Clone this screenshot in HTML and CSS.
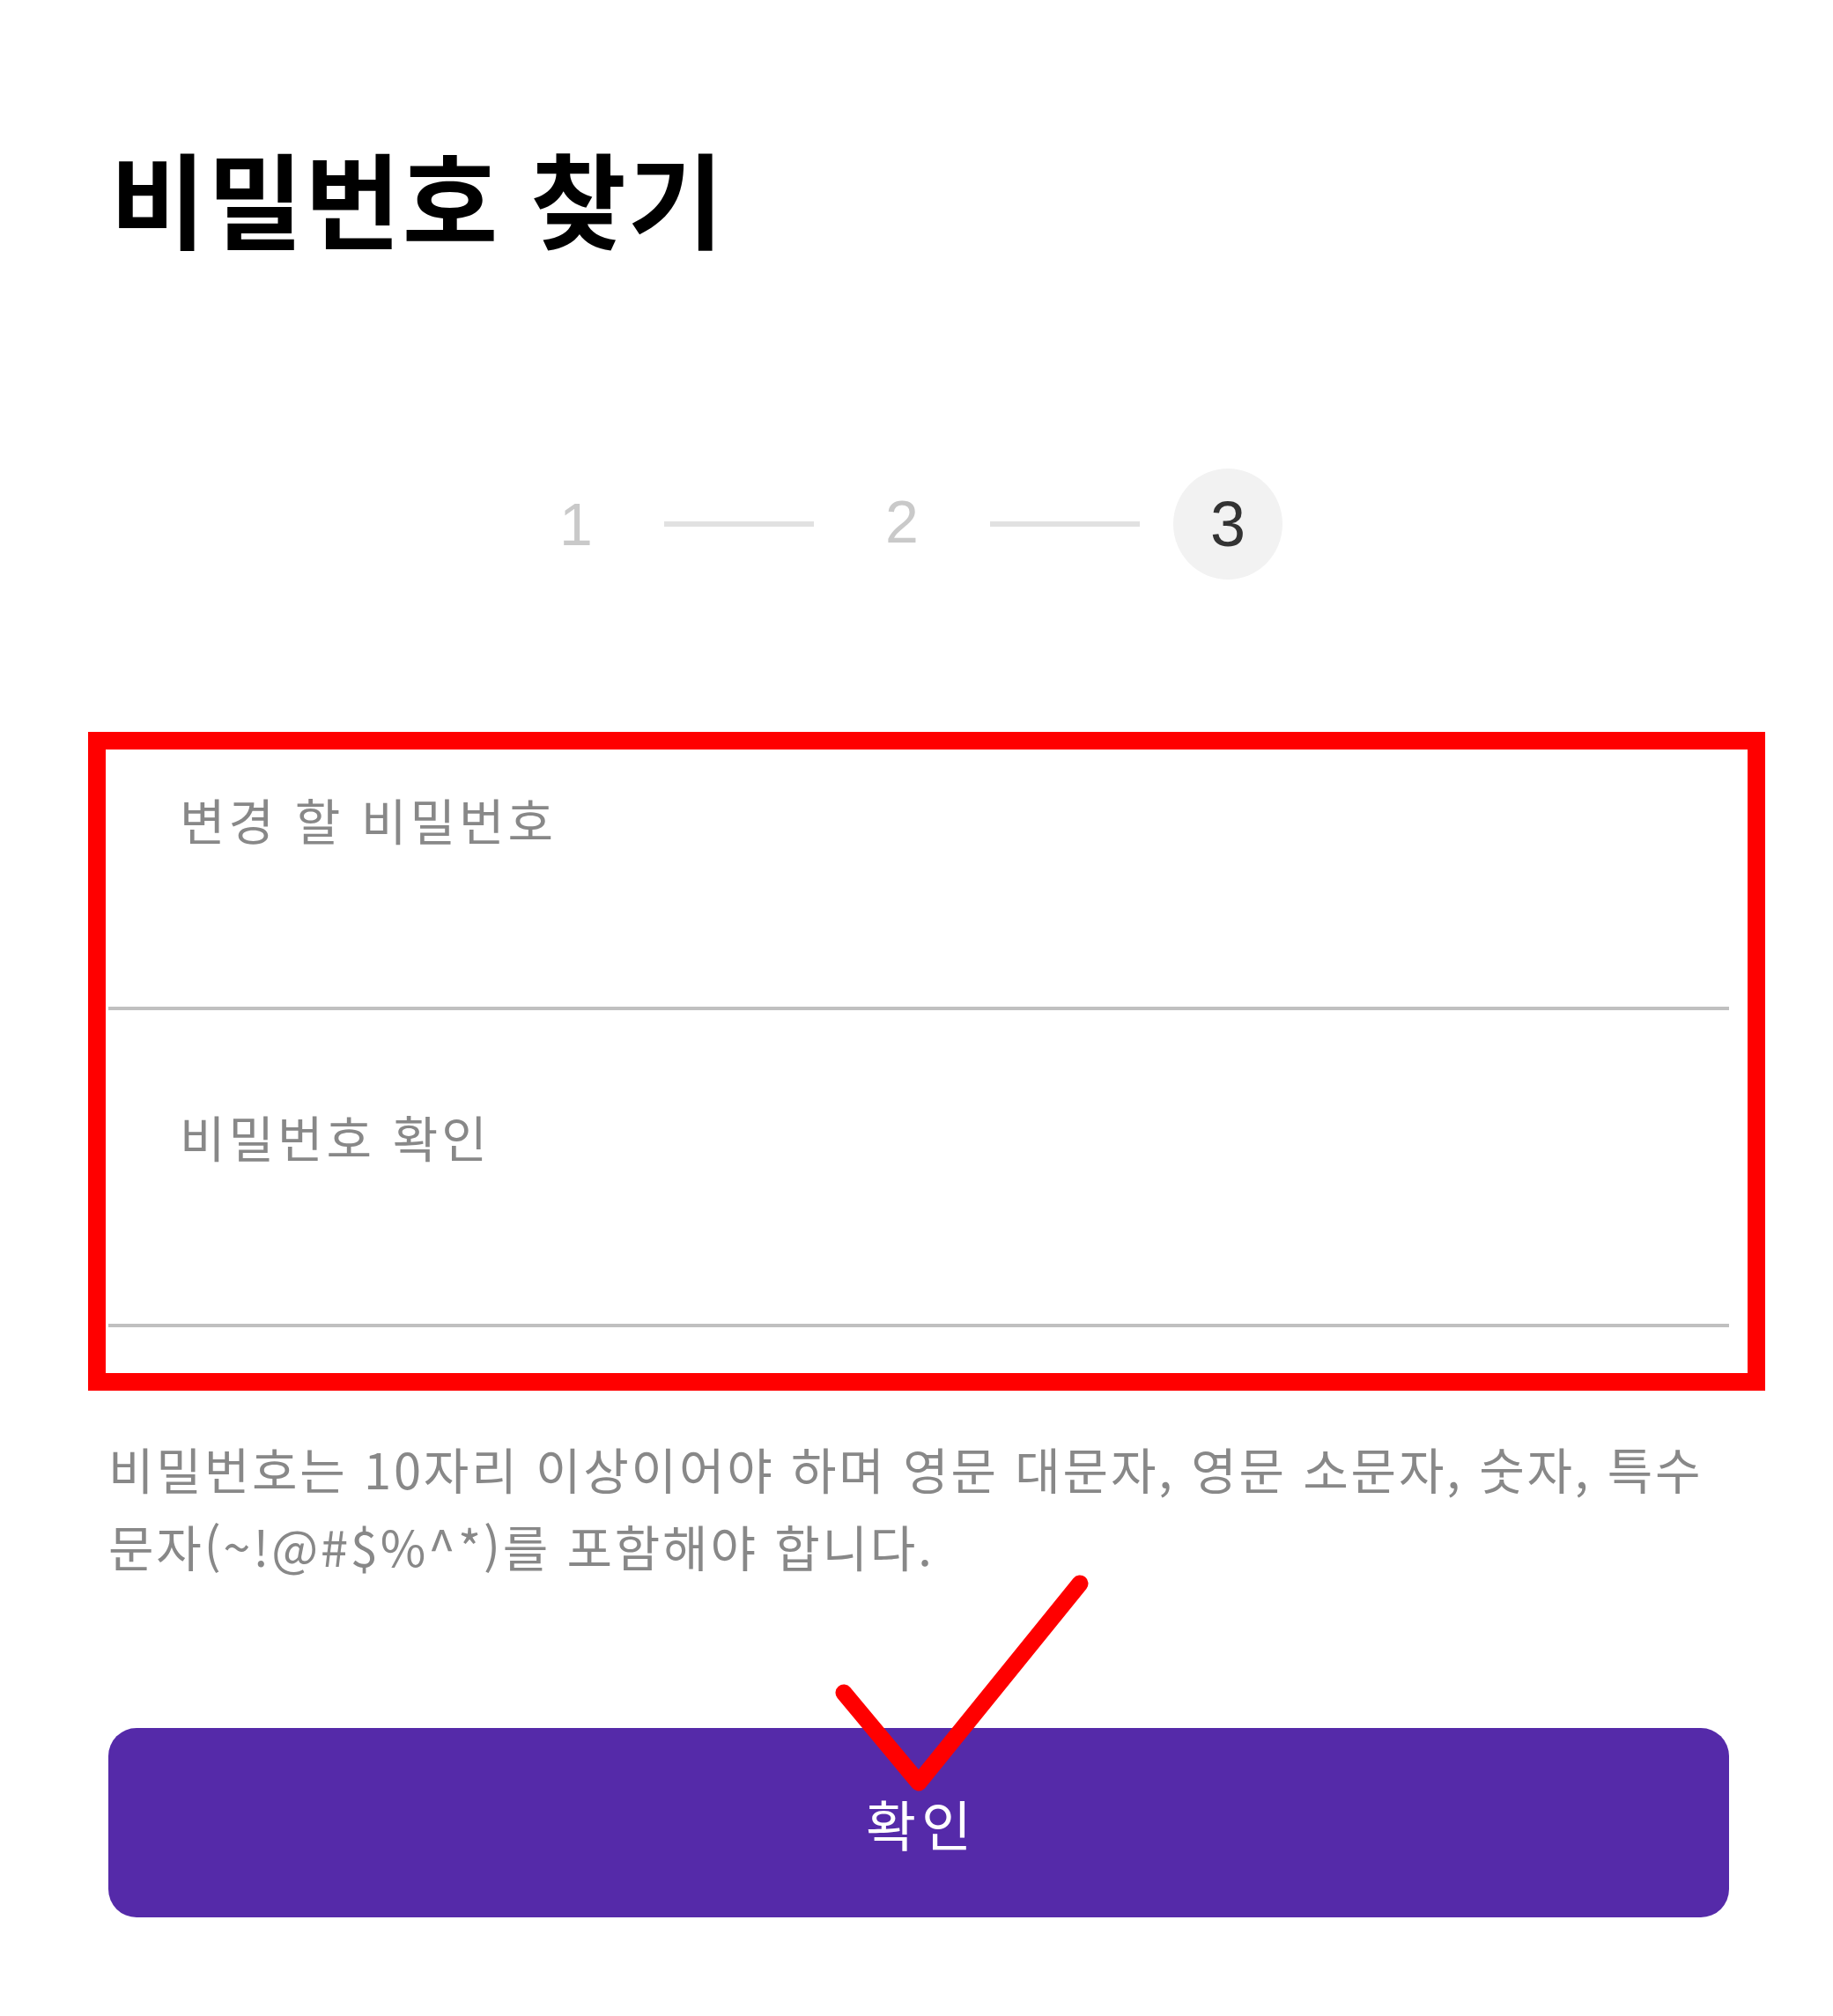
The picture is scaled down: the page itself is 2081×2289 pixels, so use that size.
FILE: index.html
```html
<!DOCTYPE html>
<html lang="ko">
<head>
<meta charset="utf-8">
<title>비밀번호 찾기</title>
<link rel="stylesheet" href="styles.css">
</head>
<body>
<main class="page">
  <h1 class="title">비밀번호 찾기</h1>

  <div class="steps">
    <span class="step">1</span>
    <span class="step-line"></span>
    <span class="step step-mid">2</span>
    <span class="step-line"></span>
    <span class="step step-active">3</span>
  </div>

  <div class="fields">
    <label class="field"><span class="field-label">변경 할 비밀번호</span></label>
    <label class="field"><span class="field-label">비밀번호 확인</span></label>
    <div class="mark-box"></div>
  </div>

  <p class="hint">비밀번호는 10자리 이상이어야 하며 영문 대문자, 영문 소문자, 숫자, 특수<br>문자(~!@#$%^*)를 포함해야 합니다.</p>

  <div class="submit-wrap">
    <button class="submit" type="button">확인</button>
    <svg class="check" width="300" height="260" viewBox="0 0 300 260" aria-hidden="true">
      <polyline points="15,140 100,242 283,16" fill="none" stroke="#ff0000" stroke-width="19" stroke-linecap="round" stroke-linejoin="round"/>
    </svg>
  </div>
</main>
</body>
</html>
```
FILE: styles.css
```css
html, body {
  margin: 0;
  padding: 0;
  background: #ffffff;
}

.page {
  padding: 152px 118px 120px 123px;
  font-family: "Noto Sans CJK KR", "Noto Sans", sans-serif;
}

.title {
  margin: 0;
  font-size: 118px;
  font-weight: 700;
  letter-spacing: 2px;
  line-height: 142px;
  color: #000000;
  padding-left: 2px;
}

.steps {
  display: flex;
  justify-content: center;
  align-items: center;
  gap: 38px;
  margin-top: 238px;
  padding-right: 38px;
  height: 126px;
}

.step {
  width: 124px;
  height: 126px;
  display: flex;
  align-items: center;
  justify-content: center;
  font-family: "Liberation Sans", Arial, sans-serif;
  font-size: 68px;
  color: #c9c9c9;
  border-radius: 50%;
}

.step-mid {
  padding-bottom: 6px;
  box-sizing: border-box;
}

.step-active {
  background: #f2f2f2;
  color: #333333;
  font-size: 72px;
}

.step-line {
  width: 170px;
  height: 6px;
  background: #e1e1e1;
}

.fields {
  position: relative;
  margin-top: 129px;
}

.field {
  display: block;
  box-sizing: border-box;
  height: 360px;
  padding: 109px 0 0 81px;
  border-bottom: 4px solid #c0c0c0;
}

.field-label {
  font-size: 56px;
  line-height: 67px;
  letter-spacing: 4px;
  color: #888888;
}

.mark-box {
  position: absolute;
  left: -23px;
  top: 44px;
  width: 1904px;
  height: 748px;
  box-sizing: border-box;
  border: 20px solid #ff0000;
  pointer-events: none;
}

.hint {
  margin: 116px 0 0 0;
  font-size: 56px;
  line-height: 88px;
  letter-spacing: 2.8px;
  color: #888888;
}

.submit-wrap {
  position: relative;
  margin-top: 163px;
}

.submit {
  display: block;
  width: 100%;
  height: 215px;
  border: none;
  border-radius: 32px;
  background: #552aa9;
  color: #ffffff;
  font-family: "Noto Sans CJK KR", "Noto Sans", sans-serif;
  font-size: 62px;
  letter-spacing: 6px;
  text-indent: 6px;
  padding: 0;
}

.check {
  position: absolute;
  left: 820px;
  top: -180px;
}
```
